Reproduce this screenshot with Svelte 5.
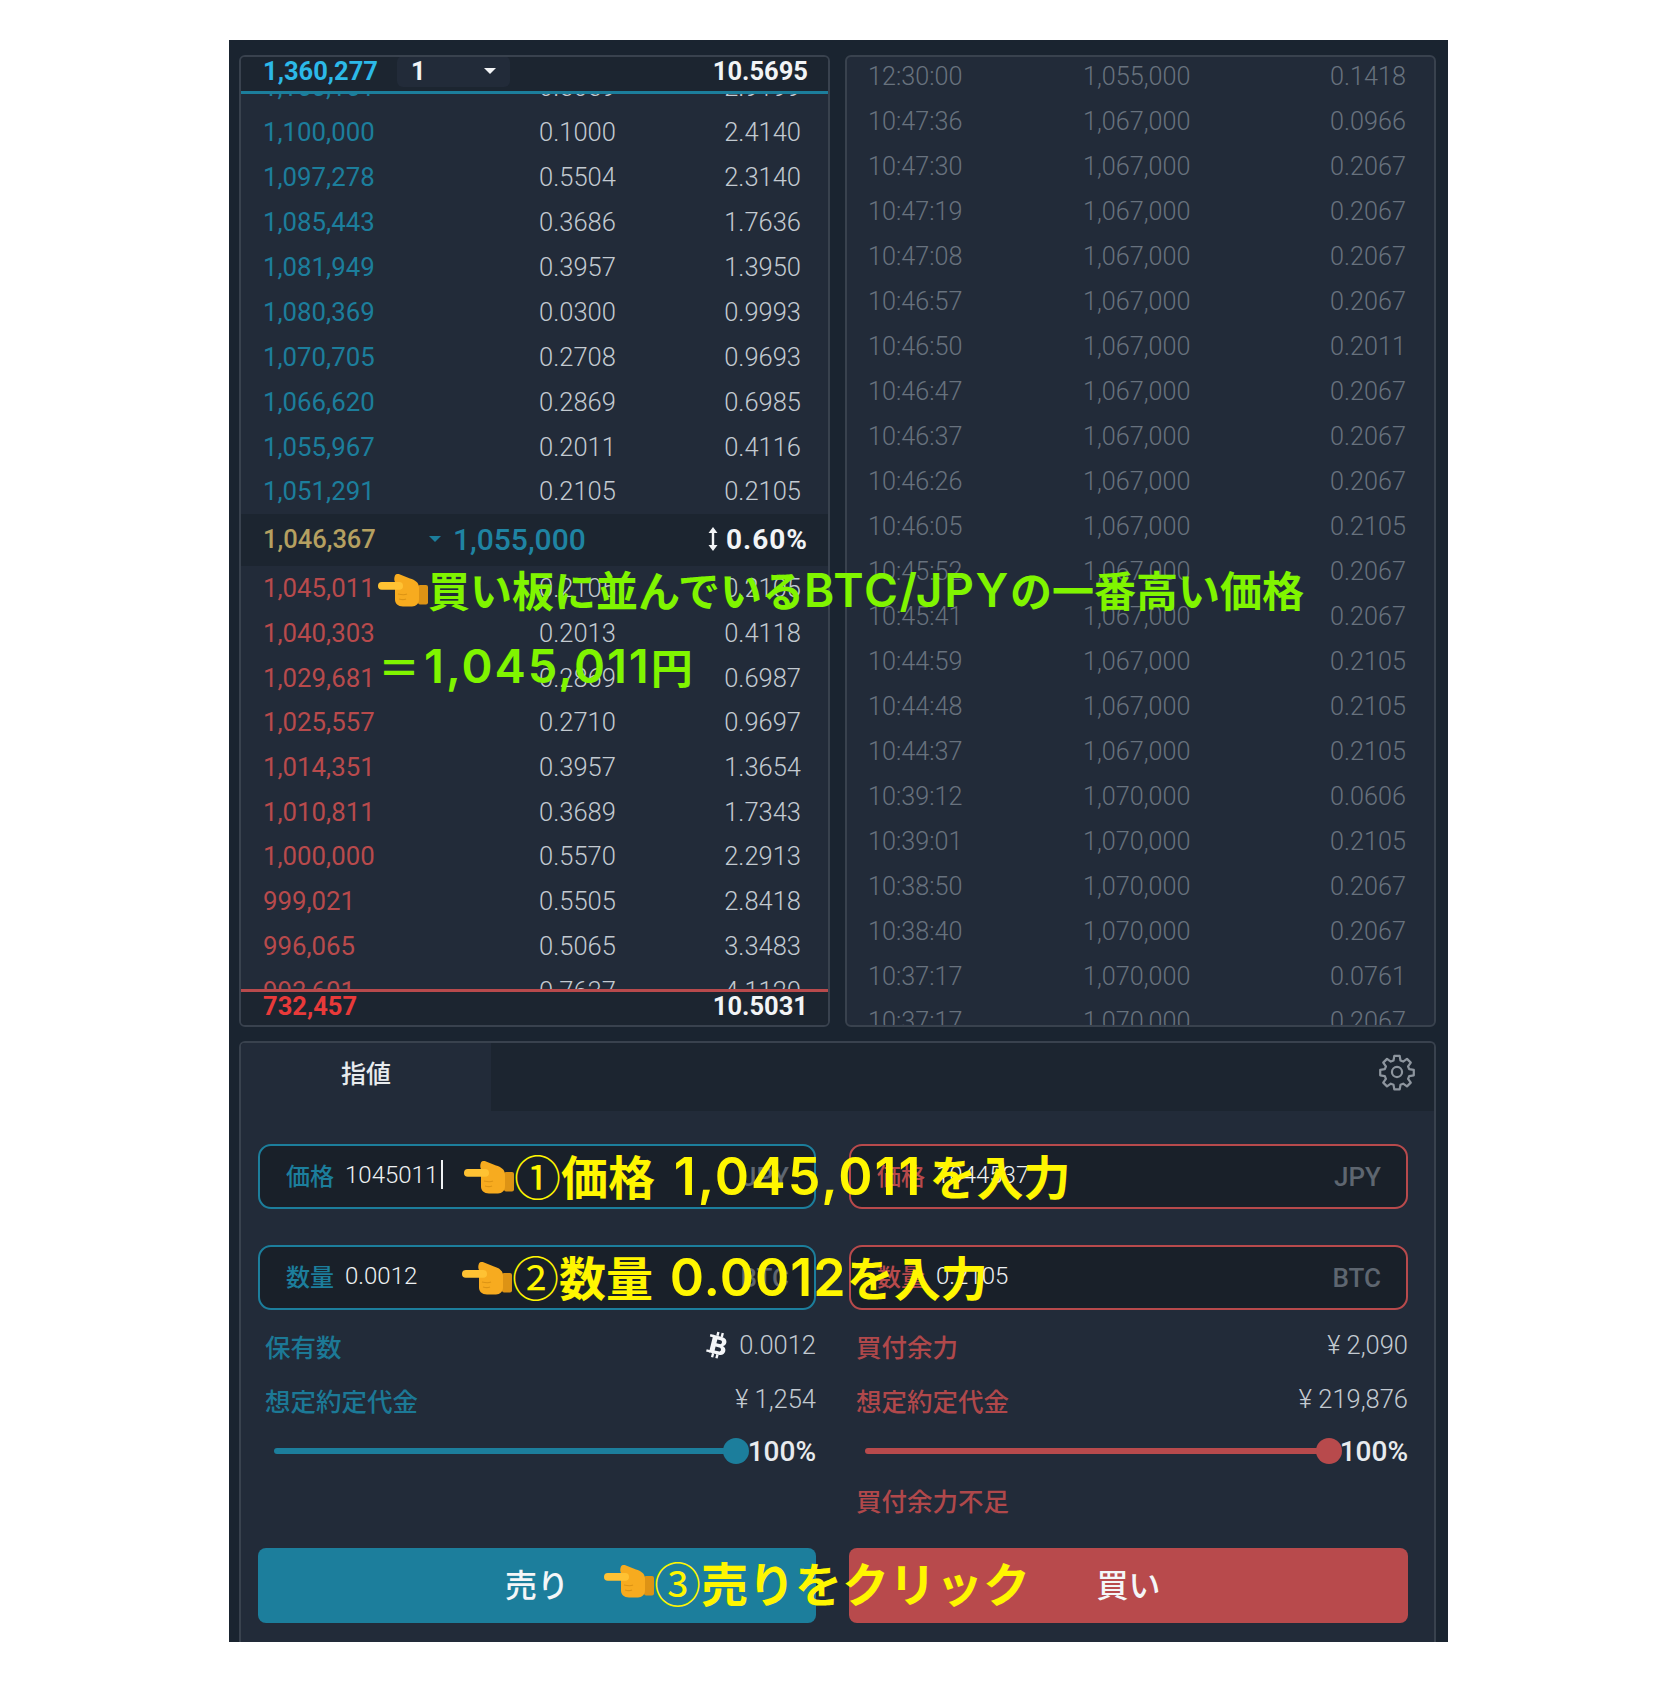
<script>
  const asksTop = [
    ['1,160,161', '0.5059', '2.9199'],
    ['1,100,000', '0.1000', '2.4140'],
    ['1,097,278', '0.5504', '2.3140'],
    ['1,085,443', '0.3686', '1.7636'],
    ['1,081,949', '0.3957', '1.3950'],
    ['1,080,369', '0.0300', '0.9993'],
    ['1,070,705', '0.2708', '0.9693'],
    ['1,066,620', '0.2869', '0.6985'],
    ['1,055,967', '0.2011', '0.4116'],
    ['1,051,291', '0.2105', '0.2105']
  ];
  const bids = [
    ['1,045,011', '0.2105', '0.2105'],
    ['1,040,303', '0.2013', '0.4118'],
    ['1,029,681', '0.2869', '0.6987'],
    ['1,025,557', '0.2710', '0.9697'],
    ['1,014,351', '0.3957', '1.3654'],
    ['1,010,811', '0.3689', '1.7343'],
    ['1,000,000', '0.5570', '2.2913'],
    ['999,021', '0.5505', '2.8418'],
    ['996,065', '0.5065', '3.3483'],
    ['993,601', '0.7637', '4.1120']
  ];
  const trades = [
    ['12:30:00', '1,055,000', '0.1418'],
    ['10:47:36', '1,067,000', '0.0966'],
    ['10:47:30', '1,067,000', '0.2067'],
    ['10:47:19', '1,067,000', '0.2067'],
    ['10:47:08', '1,067,000', '0.2067'],
    ['10:46:57', '1,067,000', '0.2067'],
    ['10:46:50', '1,067,000', '0.2011'],
    ['10:46:47', '1,067,000', '0.2067'],
    ['10:46:37', '1,067,000', '0.2067'],
    ['10:46:26', '1,067,000', '0.2067'],
    ['10:46:05', '1,067,000', '0.2105'],
    ['10:45:52', '1,067,000', '0.2067'],
    ['10:45:41', '1,067,000', '0.2067'],
    ['10:44:59', '1,067,000', '0.2105'],
    ['10:44:48', '1,067,000', '0.2105'],
    ['10:44:37', '1,067,000', '0.2105'],
    ['10:39:12', '1,070,000', '0.0606'],
    ['10:39:01', '1,070,000', '0.2105'],
    ['10:38:50', '1,070,000', '0.2067'],
    ['10:38:40', '1,070,000', '0.2067'],
    ['10:37:17', '1,070,000', '0.0761'],
    ['10:37:17', '1,070,000', '0.2067']
  ];
</script>

{#snippet hand()}
  <svg class="hand" viewBox="0 0 50 33" aria-hidden="true">
    <rect x="40" y="11" width="10" height="19.500" rx="2" fill="#dd9315" />
    <path d="M17 1.500c1-1.600 3-1.800 5-1l10 4c5 1.500 9 4 9 9v12c0 4-3 7-7 7h-9c-5 0-8-3-8-7v-10l-1-3.500 4-.5-3-3.500c-1-1.500-1-4.500 0-6.500z" fill="#f7ab1f" />
    <rect x="0" y="8" width="25" height="7.800" rx="3.800" fill="#ffc233" />
    <path d="M20 20c4 1 7 1 9 0M21 25c3 1 5 1 7 0" stroke="#dc9415" stroke-width="1.200" fill="none" />
  </svg>
{/snippet}

<div class="frame">
  <div class="top">
    <section class="panel book">
      <div class="book-head">
        <span class="ask-total">1,360,277</span>
        <span class="select">1<i class="caret"></i></span>
        <span class="sum">10.5695</span>
      </div>
      <div class="book-rows asks">
        {#each asksTop as [price, qty, total]}
          <div class="row">
            <span class="price teal">{price}</span>
            <span class="qty">{qty}</span>
            <span class="total">{total}</span>
          </div>
        {/each}
      </div>
      <div class="mid">
        <span class="mid-price">1,046,367</span>
        <i class="caret small"></i>
        <span class="last">1,055,000</span>
        <svg class="updown" viewBox="0 0 10 24" aria-hidden="true">
          <path d="M5 0l4.500 6H6.200v12h3.300L5 24 .5 18h3.300V6H.5z" fill="#f2f4f6" />
        </svg>
        <span class="spread">0.60%</span>
      </div>
      <div class="book-rows bids">
        {#each bids as [price, qty, total]}
          <div class="row">
            <span class="price red">{price}</span>
            <span class="qty">{qty}</span>
            <span class="total">{total}</span>
          </div>
        {/each}
      </div>
      <div class="book-foot">
        <span class="bid-total">732,457</span>
        <span class="sum">10.5031</span>
      </div>
    </section>

    <section class="panel tape">
      {#each trades as [time, price, qty]}
        <div class="trade">
          <span class="time">{time}</span>
          <span class="tprice">{price}</span>
          <span class="tqty">{qty}</span>
        </div>
      {/each}
    </section>
  </div>

  <section class="panel order">
    <div class="tabs">
      <div class="tab">指値</div>
      <svg class="gear" viewBox="0 0 24 24" aria-hidden="true">
        <circle cx="12" cy="12" r="3.200" />
        <path d="M10.300 1.800h3.400l.5 2.900 1.700.7 2.400-1.700 2.400 2.400-1.700 2.400.7 1.700 2.900.5v3.400l-2.900.5-.7 1.700 1.700 2.400-2.400 2.400-2.400-1.700-1.700.7-.5 2.900h-3.400l-.5-2.900-1.700-.7-2.400 1.700-2.400-2.400 1.700-2.400-.7-1.700-2.900-.5v-3.400l2.900-.5.7-1.700-1.700-2.400 2.400-2.400 2.400 1.700 1.700-.7z" stroke-linejoin="round" />
      </svg>
    </div>

    <div class="columns">
      <div class="side sell">
        <div class="field">
          <span class="flabel">価格</span>
          <span class="fvalue">1045011<i class="cursor"></i></span>
          <span class="unit">JPY</span>
        </div>
        <div class="field">
          <span class="flabel">数量</span>
          <span class="fvalue">0.0012</span>
          <span class="unit">BTC</span>
        </div>
        <div class="info first">
          <span class="ilabel">保有数</span>
          <span class="ivalue">
            <svg class="btc" viewBox="0 0 24 28" aria-hidden="true">
              <g transform="rotate(14 12 14)" fill="#f4f6f8">
                <path fill-rule="evenodd" d="M6 5h9c3.500 0 5.500 2 5.500 4.500 0 2-1 3.300-2.600 4 2.300.6 3.600 2.300 3.600 4.500 0 3-2.200 5-5.800 5H6zm5 3.500v4h3.200c1.300 0 2-.8 2-2s-.7-2-2-2zm0 7.300v4h3.800c1.400 0 2.200-.8 2.200-2s-.8-2-2.200-2z" />
                <rect x="9" y="1" width="2.400" height="4" /><rect x="13.500" y="1" width="2.400" height="4" />
                <rect x="9" y="23" width="2.400" height="4" /><rect x="13.500" y="23" width="2.400" height="4" />
                <rect x="3" y="5" width="4" height="2.400" /><rect x="3" y="20.600" width="4" height="2.400" />
              </g>
            </svg>
            0.0012
          </span>
        </div>
        <div class="info">
          <span class="ilabel">想定約定代金</span>
          <span class="ivalue">¥ 1,254</span>
        </div>
        <div class="slider">
          <div class="track"><i class="knob"></i></div>
          <span class="pct">100%</span>
        </div>
        <div class="warn"></div>
        <button class="action">売り</button>
      </div>

      <div class="side buy">
        <div class="field">
          <span class="flabel">価格</span>
          <span class="fvalue">1044537</span>
          <span class="unit">JPY</span>
        </div>
        <div class="field">
          <span class="flabel">数量</span>
          <span class="fvalue">0.2105</span>
          <span class="unit">BTC</span>
        </div>
        <div class="info first">
          <span class="ilabel">買付余力</span>
          <span class="ivalue">¥ 2,090</span>
        </div>
        <div class="info">
          <span class="ilabel">想定約定代金</span>
          <span class="ivalue">¥ 219,876</span>
        </div>
        <div class="slider">
          <div class="track"><i class="knob"></i></div>
          <span class="pct">100%</span>
        </div>
        <div class="warn">買付余力不足</div>
        <button class="action">買い</button>
      </div>
    </div>
  </section>

  <!-- annotations drawn on top of the screenshot -->
  <div class="note green n1">{@render hand()}<span>買い板に並んでいる<span class="latin">BTC/JPY</span>の一番高い価格</span></div>
  <div class="note green n2">＝<span class="num">1,045,011</span>円</div>
  <div class="note yellow n3">{@render hand()}<span><span class="circled">①</span>価格 <span class="num">1,045,011</span>を入力</span></div>
  <div class="note yellow n4">{@render hand()}<span><span class="circled">②</span>数量 <span class="num">0.0012</span>を入力</span></div>
  <div class="note yellow n5">{@render hand()}<span><span class="circled">③</span>売りをクリック</span></div>
</div>

<style>
  :global(body) {
    margin: 0;
    background: #fff;
  }

  .frame {
    position: relative;
    box-sizing: border-box;
    display: flex;
    flex-direction: column;
    gap: 14px;
    width: 1219px;
    height: 1602px;
    margin: 40px 0 0 229px;
    padding: 15px 12px 0 10px;
    background: #1a2430;
    font-family: Roboto, "Noto Sans CJK JP", sans-serif;
    font-size: 25.500px;
  }

  .top {
    display: grid;
    grid-template-columns: 591px 591px;
    gap: 15px;
    height: 972px;
  }

  .panel {
    box-sizing: border-box;
    border: 2px solid #39424e;
    border-radius: 6px;
    background: #222b39;
    overflow: hidden;
  }

  /* order book */
  .book {
    display: flex;
    flex-direction: column;
  }

  .book-head {
    flex: none;
    display: flex;
    align-items: center;
    height: 28px;
    padding: 0 20px 6px 22px;
    border-bottom: 3px solid #1c7e9c;
    background: #1c2530;
    font-weight: 500;
  }

  .ask-total {
    color: #2cb9e8;
    width: 134px;
    font-weight: 700;
  }

  .select {
    box-sizing: border-box;
    display: flex;
    flex: none;
    align-items: center;
    justify-content: space-between;
    width: 113px;
    height: 31px;
    padding: 0 14px;
    border-radius: 6px;
    background: #222b39;
    color: #f2f4f6;
    font-weight: 700;
  }

  .caret {
    width: 0;
    height: 0;
    border-left: 6px solid transparent;
    border-right: 6px solid transparent;
    border-top: 6px solid #f2f4f6;
  }

  .caret.small {
    border-top-color: #1c7e9c;
    margin: 0 12px 0 21px;
  }

  .sum {
    margin-left: auto;
    color: #f2f4f6;
    font-weight: 700;
  }

  .book-rows {
    overflow: hidden;
  }

  .asks {
    flex: none;
    height: 420px;
  }

  .asks .row {
    height: 44.900px;
  }

  .asks .row:first-child {
    margin-top: -29px;
  }

  .bids {
    flex: 1;
    min-height: 0;
  }

  .row {
    display: flex;
    align-items: center;
    height: 44.700px;
    padding: 0 27px 0 22px;
    font-weight: 300;
  }

  .price {
    width: 276px;
    font-size: 25.800px;
    font-weight: 400;
  }

  .teal {
    color: #1c7e9c;
  }

  .red {
    color: #b84a4c;
  }

  .qty {
    color: #c3cad1;
  }

  .total {
    margin-left: auto;
    color: #c3cad1;
  }

  .mid {
    flex: none;
    display: flex;
    align-items: center;
    height: 52px;
    padding: 0 20px 2px 22px;
    box-sizing: border-box;
    background: #1c2530;
    font-weight: 500;
  }

  .mid-price {
    width: 145px;
    color: #b5a060;
  }

  .last {
    color: #1f84a3;
    font-size: 30px;
  }

  .updown {
    width: 10px;
    height: 24px;
    margin-left: auto;
    margin-right: 8px;
  }

  .spread {
    color: #f2f4f6;
    font-size: 28px;
    font-weight: 700;
    letter-spacing: 1px;
  }

  .book-foot {
    flex: none;
    display: flex;
    align-items: center;
    height: 28px;
    padding: 0 20px 5px 22px;
    border-top: 3px solid #b84a4c;
    background: #1c2530;
  }

  .bid-total {
    color: #e83a3a;
    font-weight: 700;
  }

  /* trade history */
  .tape {
    color: #68727e;
    font-size: 25.200px;
    font-weight: 300;
  }

  .trade {
    display: flex;
    align-items: center;
    height: 45px;
    padding: 0 28px 0 21px;
  }

  .trade:first-child {
    margin-top: -3px;
  }

  .time {
    width: 215px;
  }

  .tqty {
    margin-left: auto;
  }

  /* order form */
  .order {
    flex: 1;
    border-bottom: 0;
    border-radius: 6px 6px 0 0;
  }

  .tabs {
    display: flex;
    align-items: center;
    height: 68px;
    padding-right: 18px;
    background: #1c2530;
  }

  .tab {
    box-sizing: border-box;
    display: flex;
    align-items: center;
    justify-content: center;
    width: 250px;
    height: 100%;
    padding-bottom: 11px;
    background: #222b39;
    color: #e8ebee;
    font-size: 25px;
    font-weight: 500;
  }

  .gear {
    width: 38px;
    height: 38px;
    margin-left: auto;
    margin-bottom: 10px;
    fill: none;
    stroke: #8d959e;
    stroke-width: 1.400;
  }

  .columns {
    display: grid;
    grid-template-columns: 558px 559px;
    gap: 33px;
    padding: 33px 27px 0 17px;
  }

  .side {
    display: flex;
    flex-direction: column;
  }

  .field {
    box-sizing: border-box;
    display: flex;
    align-items: center;
    height: 65px;
    margin-bottom: 36px;
    padding: 0 25px 0 26px;
    border: 2.500px solid var(--tone);
    border-radius: 13px;
    background: #192029;
  }

  .sell {
    --tone: #1c7e9c;
  }

  .buy {
    --tone: #b84a4c;
  }

  .flabel {
    width: 59px;
    margin-bottom: 4px;
    color: var(--tone);
    font-size: 24px;
    font-weight: 500;
  }

  .fvalue {
    display: flex;
    align-items: center;
    margin-bottom: 4px;
    color: #eef1f3;
    font-size: 24px;
    font-weight: 300;
  }

  .cursor {
    width: 2px;
    height: 29px;
    margin-left: 3px;
    background: #eef1f3;
  }

  .unit {
    margin-left: auto;
    color: #5e6670;
    font-size: 26px;
    font-weight: 500;
  }

  .info {
    display: flex;
    align-items: center;
    justify-content: space-between;
    height: 54px;
    padding-left: 7px;
  }

  .info.first {
    margin-top: -28px;
    margin-bottom: 0;
  }

  .ilabel,
  .warn {
    color: var(--tone);
    font-size: 25.500px;
    font-weight: 500;
    opacity: 0.95;
  }

  .ivalue {
    display: flex;
    align-items: center;
    gap: 10px;
    color: #c3cad1;
    font-size: 25.500px;
    font-weight: 300;
  }

  .btc {
    width: 24px;
    height: 28px;
  }

  .slider {
    display: flex;
    align-items: center;
    height: 46px;
    margin-top: 2px;
    padding-left: 16px;
  }

  .track {
    position: relative;
    width: 463px;
    height: 6px;
    border-radius: 3px;
    background: var(--tone);
  }

  .buy .track {
    width: 465px;
  }

  .knob {
    position: absolute;
    right: -12px;
    top: -10px;
    width: 26px;
    height: 26px;
    border-radius: 50%;
    background: var(--tone);
  }

  .pct {
    margin-left: auto;
    color: #e8ebee;
    font-size: 28px;
    font-weight: 500;
  }

  .warn {
    height: 64px;
    padding: 10px 0 0 7px;
    line-height: 36px;
  }

  .action {
    height: 75px;
    padding: 0 0 6px;
    border: 0;
    border-radius: 8px;
    background: var(--tone);
    color: #f4f6f8;
    font-family: inherit;
    font-size: 32px;
    font-weight: 500;
  }

  /* annotations */
  .note {
    position: absolute;
    display: flex;
    align-items: center;
    font-family: "Noto Sans CJK JP", sans-serif;
    font-weight: 700;
    line-height: 1;
    white-space: nowrap;
  }

  .green {
    color: #80f500;
    font-size: 42px;
  }

  .yellow {
    color: #fff600;
    font-size: 47px;
  }

  .hand {
    width: 50px;
    height: 33px;
    flex: none;
  }

  .latin {
    font-family: Inter, sans-serif;
    font-size: 46px;
    font-weight: 600;
    letter-spacing: 1.700px;
  }

  .num {
    margin-left: 8px;
    font-family: Inter, sans-serif;
    font-size: 52px;
    font-weight: 600;
    letter-spacing: 2px;
  }

  .green .num {
    margin-left: 4px;
    font-size: 47px;
  }

  .n3 .num {
    margin-right: 7px;
  }

  .n4 .num {
    margin-left: 6px;
    letter-spacing: 1px;
  }

  .circled {
    font-weight: 400;
  }

  .n1 {
    left: 149px;
    top: 527px;
  }

  .n2 {
    left: 149px;
    top: 602px;
  }

  .n3 {
    left: 235px;
    top: 1111px;
  }

  .n4 {
    left: 233px;
    top: 1212px;
  }

  .n5 {
    left: 375px;
    top: 1518px;
  }
</style>
